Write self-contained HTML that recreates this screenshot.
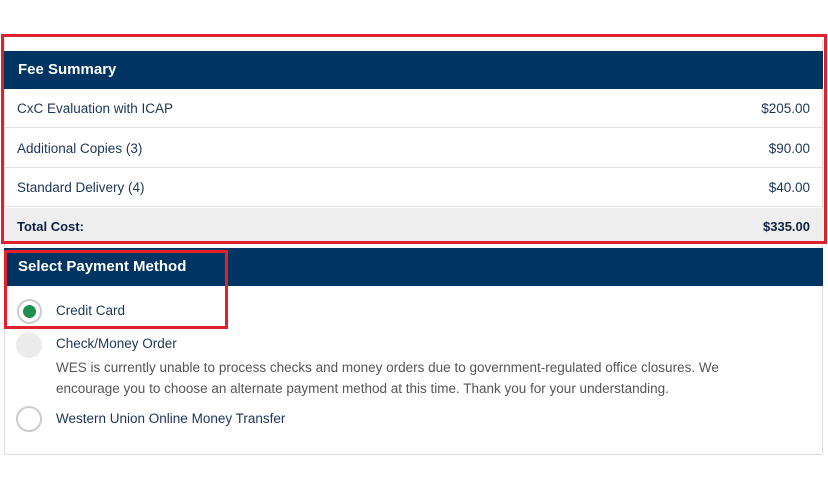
<!DOCTYPE html>
<html><head><style>
*{box-sizing:border-box;margin:0;padding:0}
body{width:828px;height:500px;background:#fff;font-family:"Liberation Sans",sans-serif;position:relative;overflow:hidden}
.abs{position:absolute}
.hdr{background:#003462;color:#fff;font-weight:bold;font-size:15px;padding-left:14px}
.row{left:4px;width:819px;height:39px;border-bottom:1px solid #e2e2e2;font-size:13.5px;color:#1d3557;line-height:39px;padding:0 13px}
.row span{float:right}
.red{border:3px solid #e0202a}
.radio{width:25px;height:25px;border-radius:50%;border:2px solid #ccc;background:#fff}
.lbl{font-size:13.5px;color:#1d3557}
</style></head><body>
<div class="abs" style="left:4px;top:40px;width:819px;height:415px;border:1px solid #ddd;border-top:none;border-radius:0 0 3px 3px"></div>
<div class="abs hdr" style="left:4px;top:51px;width:819px;height:38px;line-height:38px">Fee Summary</div>
<div class="abs row" style="top:89px">CxC Evaluation with ICAP<span>$205.00</span></div>
<div class="abs row" style="top:129px">Additional Copies (3)<span>$90.00</span></div>
<div class="abs row" style="top:168px">Standard Delivery (4)<span>$40.00</span></div>
<div class="abs row" style="top:208px;background:#efeeee;height:34px;line-height:38px;font-weight:bold;border:none;color:#0e2240;font-size:13px">Total Cost:<span>$335.00</span></div>
<div class="abs red" style="left:1px;top:34px;width:826px;height:210px"></div>
<div class="abs hdr" style="left:4px;top:248px;width:819px;height:38px;line-height:38px">Select Payment Method</div>
<div class="abs radio" style="left:17px;top:299px"></div>
<div class="abs" style="left:23px;top:305px;width:13px;height:13px;border-radius:50%;background:#1e8f4e"></div>
<div class="abs lbl" style="left:56px;top:303px">Credit Card</div>
<div class="abs red" style="left:4px;top:250px;width:224px;height:79px"></div>
<div class="abs" style="left:16px;top:332px;width:26px;height:26px;border-radius:50%;background:#ececec"></div>
<div class="abs lbl" style="left:56px;top:336px">Check/Money Order</div>
<div class="abs" style="left:56px;top:357px;font-size:13.5px;color:#555;line-height:21px;width:715px">WES is currently unable to process checks and money orders due to government-regulated office closures. We encourage you to choose an alternate payment method at this time. Thank you for your understanding.</div>
<div class="abs radio" style="left:16px;top:406px;width:26px;height:26px"></div>
<div class="abs lbl" style="left:56px;top:411px">Western Union Online Money Transfer</div>
</body></html>
